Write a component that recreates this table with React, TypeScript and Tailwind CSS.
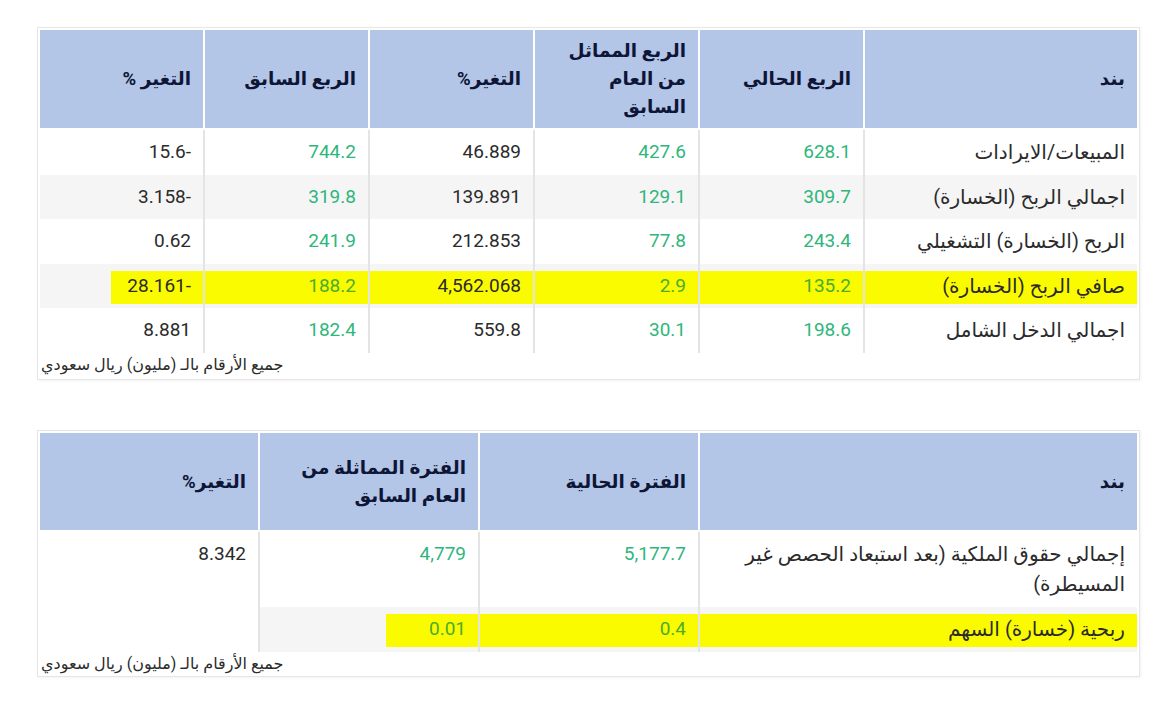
import React from 'react'

type Cell = { text?: React.ReactNode; green?: boolean; num?: boolean; band?: 'full' | 'part' | 'none' }
type Row = { cells: Cell[]; shade?: boolean; mark?: boolean; h: string }

interface TableProps {
  cols: string
  headers: React.ReactNode[]
  headerH: string
  rows: Row[]
  footH: string
  top: string
}

function DataTable({ cols, headers, headerH, rows, footH, top }: TableProps) {
  return (
    <div className={`ml-[37px] w-[1103px] border border-[#e6e6e6] bg-white p-[2px] shadow-[1px_1px_3px_rgba(0,0,0,0.05)] ${top}`}>
      {/* header */}
      <div dir="rtl" className={`grid ${cols} gap-x-[2px]`}>
        {headers.map((h, i) => (
          <div
            key={i}
            className={`${headerH} flex items-center bg-[#b4c6e8] pr-3 text-right text-[18.5px] font-bold leading-[28px] text-[#0d1636]`}
          >
            <div>{h}</div>
          </div>
        ))}
      </div>

      {/* body */}
      <div dir="rtl" className={`mt-[2px] grid ${cols} gap-x-[2px] bg-[#e4e4e4]`}>
        {rows.map((row, ri) =>
          row.cells.map((c, ci) => {
            const color = c.green
              ? row.mark
                ? 'text-[#4aad2e]'
                : 'text-[#2fb67c]'
              : 'text-[#2b2b2b]'
            const size = c.num ? 'text-[19px]' : 'text-[20px]'
            const bg = row.shade && c.band !== 'none' ? 'bg-[#f5f5f5]' : 'bg-white'
            const content = c.num ? <span dir="ltr">{c.text}</span> : c.text
            return (
              <div key={`${ri}-${ci}`} className={`${row.h} ${bg} pt-[7px] leading-[30px] ${size}`}>
                {row.mark && c.band !== 'none' ? (
                  <div
                    className={`h-[33px] bg-[#fbfb00] pr-3 ${c.band === 'part' ? 'w-[92px]' : 'w-full'} ${color}`}
                  >
                    {content}
                  </div>
                ) : (
                  <div className={`pr-3 ${color}`}>{content}</div>
                )}
              </div>
            )
          })
        )}
      </div>

      {/* note */}
      <div className={`${footH} pl-[1px] text-left text-[16px] leading-[24px] text-[#2b2b2b]`} dir="rtl">
        جميع الأرقام بالـ (مليون) ريال سعودي
      </div>
    </div>
  )
}

const g = (text: string): Cell => ({ text, green: true, num: true })
const n = (text: string): Cell => ({ text, num: true })

export default function App() {
  const t1cols = 'grid-cols-[272px_163px_163px_163px_163px_163px]'
  const t1rows: Row[] = [
    { h: 'h-[45px]', cells: [{ text: 'المبيعات/الايرادات' }, g('628.1'), g('427.6'), n('46.889'), g('744.2'), n('15.6-')] },
    { h: 'h-[44px]', shade: true, cells: [{ text: 'اجمالي الربح (الخسارة)' }, g('309.7'), g('129.1'), n('139.891'), g('319.8'), n('3.158-')] },
    { h: 'h-[45px]', cells: [{ text: 'الربح (الخسارة) التشغيلي' }, g('243.4'), g('77.8'), n('212.853'), g('241.9'), n('0.62')] },
    {
      h: 'h-[44px]',
      shade: true,
      mark: true,
      cells: [{ text: 'صافي الربح (الخسارة)' }, g('135.2'), g('2.9'), n('4,562.068'), g('188.2'), { ...n('28.161-'), band: 'part' }],
    },
    { h: 'h-[45px]', cells: [{ text: 'اجمالي الدخل الشامل' }, g('198.6'), g('30.1'), n('559.8'), g('182.4'), n('8.881')] },
  ]

  const t2cols = 'grid-cols-[437px_218px_218px_218px]'
  const t2rows: Row[] = [
    {
      h: 'h-[75px]',
      cells: [
        {
          text: (
            <>
              <span className="whitespace-nowrap">إجمالي حقوق الملكية (بعد استبعاد الحصص غير</span>
              <br />
              المسيطرة)
            </>
          ),
        },
        g('5,177.7'),
        g('4,779'),
        n('8.342'),
      ],
    },
    {
      h: 'h-[45px]',
      shade: true,
      mark: true,
      cells: [{ text: 'ربحية (خسارة) السهم' }, g('0.4'), { ...g('0.01'), band: 'part' }, { band: 'none' }],
    },
  ]

  return (
    <div className="min-h-[706px] w-[1170px] bg-white pb-[30px] font-['Roboto','DejaVu_Sans',sans-serif]">
      <DataTable
        top="mt-[27px]"
        cols={t1cols}
        headerH="h-[98px]"
        footH="h-[24px]"
        headers={[
          'بند',
          'الربع الحالي',
          <>
            الربع المماثل
            <br />
            من العام
            <br />
            السابق
          </>,
          'التغير%',
          'الربع السابق',
          'التغير %',
        ]}
        rows={t1rows}
      />
      <DataTable
        top="mt-[50px]"
        cols={t2cols}
        headerH="h-[97px]"
        footH="h-[22px]"
        headers={[
          'بند',
          'الفترة الحالية',
          <>
            الفترة المماثلة من
            <br />
            العام السابق
          </>,
          'التغير%',
        ]}
        rows={t2rows}
      />
    </div>
  )
}
